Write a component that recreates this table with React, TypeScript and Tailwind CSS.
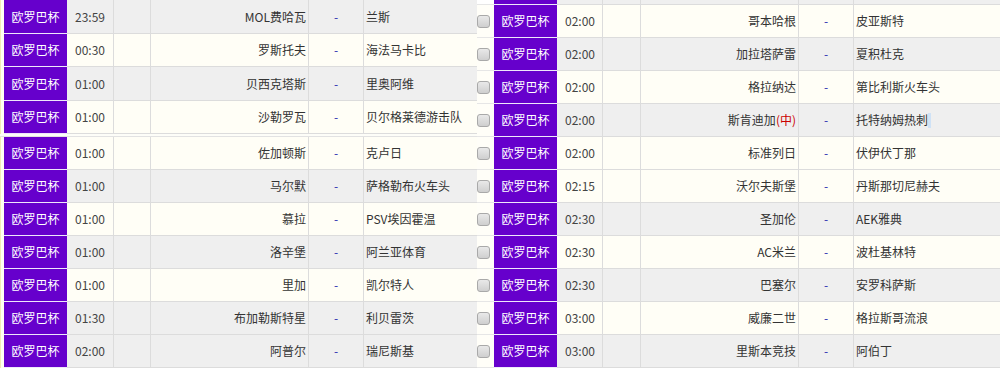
import React from "react";

type Row = { t: string; h: React.ReactNode; a: React.ReactNode; g: boolean };

const G = "bg-[#efefef]";
const C = "bg-[#fffef6]";

const leftA: Row[] = [
  { t: "23:59", h: "MOL费哈瓦", a: "兰斯", g: true },
  { t: "00:30", h: "罗斯托夫", a: "海法马卡比", g: false },
  { t: "01:00", h: "贝西克塔斯", a: "里奥阿维", g: true },
  { t: "01:00", h: "沙勒罗瓦", a: "贝尔格莱德游击队", g: false },
];
const leftB: Row[] = [
  { t: "01:00", h: "佐加顿斯", a: "克卢日", g: false },
  { t: "01:00", h: "马尔默", a: "萨格勒布火车头", g: true },
  { t: "01:00", h: "慕拉", a: "PSV埃因霍温", g: false },
  { t: "01:00", h: "洛辛堡", a: "阿兰亚体育", g: true },
  { t: "01:00", h: "里加", a: "凯尔特人", g: false },
  { t: "01:30", h: "布加勒斯特星", a: "利贝雷茨", g: true },
  { t: "02:00", h: "阿普尔", a: "瑞尼斯基", g: true },
];
const right: Row[] = [
  { t: "02:00", h: "哥本哈根", a: "皮亚斯特", g: false },
  { t: "02:00", h: "加拉塔萨雷", a: "夏积杜克", g: true },
  { t: "02:00", h: "格拉纳达", a: "第比利斯火车头", g: false },
  {
    t: "02:00",
    h: (
      <>
        斯肯迪加<span className="text-[#cc0000]">(中)</span>
      </>
    ),
    a: (
      <>
        托特纳姆热刺<span className="inline-block w-[3px] h-[15px] bg-[#cfe2f6] align-middle"></span>
      </>
    ),
    g: true,
  },
  { t: "02:00", h: "标准列日", a: "伏伊伏丁那", g: false },
  { t: "02:15", h: "沃尔夫斯堡", a: "丹斯那切尼赫夫", g: false },
  { t: "02:30", h: "圣加伦", a: "AEK雅典", g: true },
  { t: "02:30", h: "AC米兰", a: "波杜基林特", g: false },
  { t: "02:30", h: "巴塞尔", a: "安罗科萨斯", g: true },
  { t: "03:00", h: "威廉二世", a: "格拉斯哥流浪", g: false },
  { t: "03:00", h: "里斯本竞技", a: "阿伯丁", g: true },
];

const cell = "flex items-center border-b border-[#dcdcdc] overflow-hidden whitespace-nowrap";

function LeftRow({ r, h }: { r: Row; h: string }) {
  const bg = r.g ? G : C;
  return (
    <div className={`flex ${h}`}>
      <div className="w-[4px] bg-[#fffff0] border-l border-[#f3ebb5]"></div>
      <div className="w-[63px] flex items-center justify-center bg-[#6600cc] text-white border-b border-[#efe7fb]">
        欧罗巴杯
      </div>
      <div className={`${cell} ${bg} w-[47px] pl-[8px] text-[#444] border-r`}>{r.t}</div>
      <div className={`${cell} ${bg} w-[37px] border-r`}></div>
      <div className={`${cell} ${bg} w-[158px] justify-end pr-[2px] border-r`}>{r.h}</div>
      <div className={`${cell} ${bg} w-[55px] justify-center border-r text-[#2b2bb0]`}>-</div>
      <div className={`${cell} ${bg} flex-1 pl-[2px]`}>{r.a}</div>
    </div>
  );
}

function Check() {
  return (
    <div className="w-[13px] h-[13px] rounded-[3px] border border-[#a9a9a9] bg-gradient-to-b from-[#e9e9e9] to-[#cfcfcf]"></div>
  );
}

function RightRow({ r }: { r: Row }) {
  const bg = r.g ? G : C;
  return (
    <div className="flex h-[33px]">
      <div className="w-[17px] flex items-center bg-[#fffef8] border-b border-[#e6e6e6]">
        <Check />
      </div>
      <div className="w-[63px] flex items-center justify-center bg-[#6600cc] text-white border-b border-[#efe7fb]">
        欧罗巴杯
      </div>
      <div className={`${cell} ${bg} w-[46px] pl-[8px] text-[#444] border-r`}>{r.t}</div>
      <div className={`${cell} ${bg} w-[38px] border-r`}></div>
      <div className={`${cell} ${bg} w-[158px] justify-end pr-[2px] border-r`}>{r.h}</div>
      <div className={`${cell} ${bg} w-[55px] justify-center border-r text-[#2b2bb0]`}>-</div>
      <div className={`${cell} ${bg} flex-1 pl-[2px]`}>{r.a}</div>
    </div>
  );
}

export default function App() {
  return (
    <div
      className="w-[1000px] h-[368px] overflow-hidden flex bg-white text-[12px] leading-none text-[#333]"
      style={{ fontFamily: '"Noto Sans CJK SC", "Noto Sans", sans-serif' }}
    >
      <div className="w-[477px] flex flex-col">
        {leftA.map((r, i) => (
          <LeftRow key={i} r={r} h={i % 2 === 0 ? "h-[34px]" : "h-[33px]"} />
        ))}
        <div className="h-[3px] bg-[#fdfdf8] border-b border-[#e2e2e2]"></div>
        {leftB.map((r, i) => (
          <LeftRow key={i} r={r} h="h-[33px]" />
        ))}
      </div>
      <div className="flex-1 flex flex-col">
        <div className="flex h-[5px]">
          <div className="w-[17px] bg-white border-b border-[#e6e6e6]"></div>
          <div className="w-[63px] bg-[#6600cc] border-b border-[#efe7fb]"></div>
          <div className={`${G} w-[46px] border-b border-r border-[#dcdcdc]`}></div>
          <div className={`${G} w-[38px] border-b border-r border-[#dcdcdc]`}></div>
          <div className={`${G} w-[158px] border-b border-r border-[#dcdcdc]`}></div>
          <div className={`${G} w-[55px] border-b border-r border-[#dcdcdc]`}></div>
          <div className={`${G} flex-1 border-b border-[#dcdcdc]`}></div>
        </div>
        {right.map((r, i) => (
          <RightRow key={i} r={r} />
        ))}
      </div>
    </div>
  );
}
